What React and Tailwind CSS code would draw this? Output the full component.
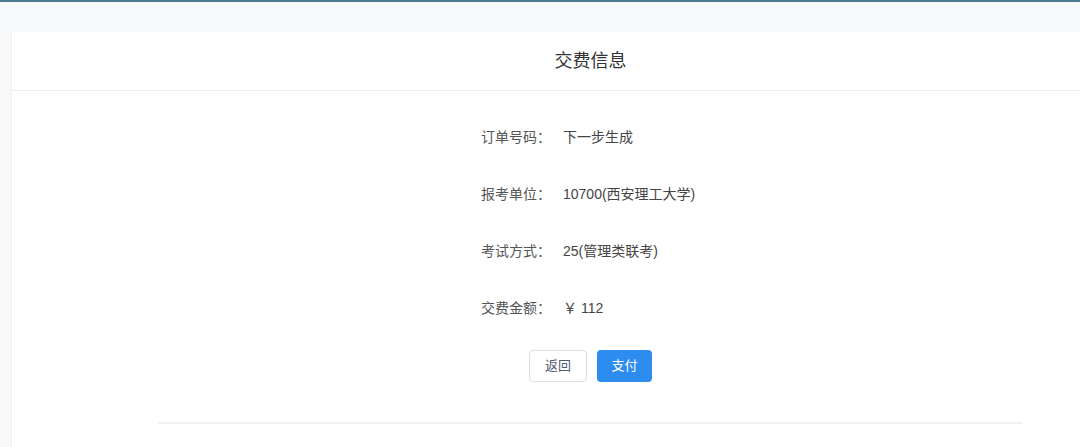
export default function App() {
  const rows = [
    ["订单号码：", "下一步生成"],
    ["报考单位：", "10700(西安理工大学)"],
    ["考试方式：", "25(管理类联考)"],
    ["交费金额：", "￥ 112"],
  ];
  return (
    <div
      className="w-[1080px] h-[447px] overflow-hidden bg-[#f7f8fa] border-t-2 border-[#4d7d92]"
      style={{ fontFamily: '"Liberation Sans", "Noto Sans CJK SC", sans-serif' }}
    >
      <div className="ml-[11px] mt-[30px] w-[1158px] h-[500px] bg-white border-l border-[#eeeeee]">
        {/* Header */}
        <div className="h-[59px] border-b border-[#efefef] flex items-center justify-center">
          <span className="text-[18px] text-[#333333]">交费信息</span>
        </div>

        {/* Form */}
        <div className="pt-[18px] ml-[469px]">
          {rows.map(([label, value]) => (
            <div key={label} className="h-[57px] flex items-center text-[14px]">
              <span className="w-[82px] text-[#555555]">{label}</span>
              <span className="text-[#444444]">{value}</span>
            </div>
          ))}
        </div>

        <div className="mt-[13px] flex justify-center gap-[10px]">
          <button className="w-[58px] h-[32px] rounded border border-[#dcdee2] bg-white text-[13px] text-[#515a6e]">
            返回
          </button>
          <button className="w-[55px] h-[32px] rounded bg-[#2d8cf0] text-[13px] text-white">
            支付
          </button>
        </div>

        <div className="mt-[40px] ml-[146px] w-[865px] h-[2px] bg-[#f0f0f0]" />
      </div>
    </div>
  );
}
